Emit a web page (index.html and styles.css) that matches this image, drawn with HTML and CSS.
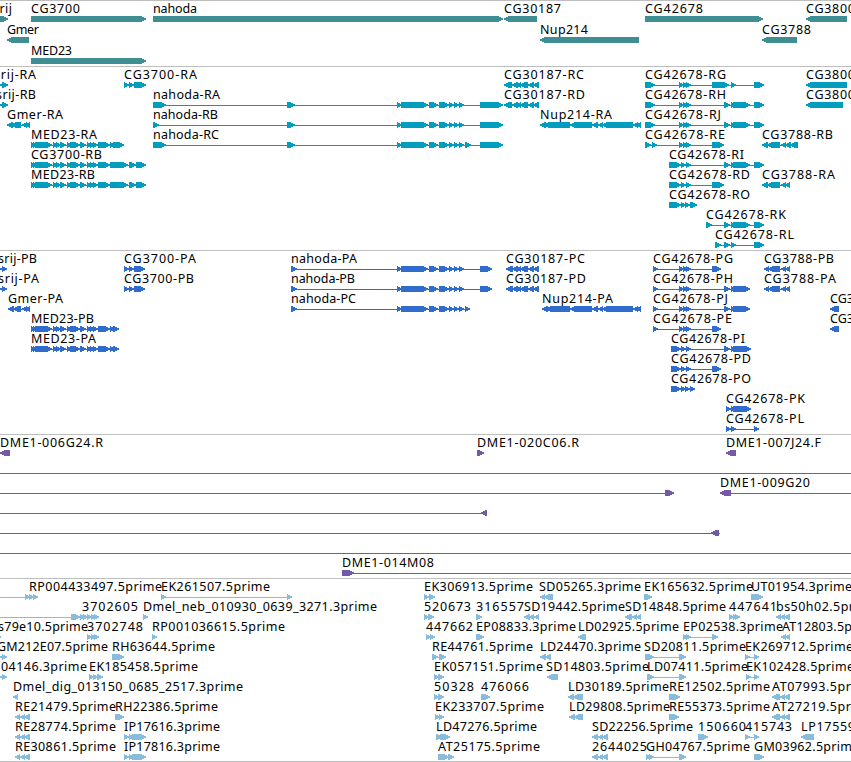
FILE: index.html
```html
<!DOCTYPE html>
<html lang="en">
<head>
<meta charset="utf-8">
<title>Genome tracks</title>
<link rel="stylesheet" href="styles.css">
</head>
<body>
<main class="browser" id="browser"></main>
<script src="tracks.js"></script>
</body>
</html>
```
FILE: styles.css
```css
body {
  margin: 0;
  background: #fff;
  overflow: hidden;
}

.browser {
  display: flex;
  flex-direction: column;
  width: 851px;
  border-bottom: 1px solid #bebebe;
}

.track {
  border-top: 1px solid #bebebe;
}

.track svg {
  display: block;
  width: 851px;
  overflow: hidden;
}

.label {
  font: 12.5px "Noto Sans", "DejaVu Sans", sans-serif;
  fill: #000;
}

.shape {
  shape-rendering: crispEdges;
  fill: currentColor;
}

.gene { color: #3f8e94; }
.transcript { color: #009dbf; }
.protein { color: #306ccd; }
.clone { color: #7459a7; }
.est { color: #88bcdd; }
```
FILE: tracks.js
```js
// Feature: row | label | label start | label end | strand | blocks | optional line extent
const med = "31-34 33-36 35-52 53-57 56-60 60-66 67-71 70-80 80-86 87-91 90-94 93-98 ";
const nah = "397-402 401-428 429-438 439-449 449-454 454-459 459-464 ";
const cg3 = "512-518 516-521 520-528 528-534 533-539";
const nup = " 570-592 592-598 598-603 602-633 633-638 637-641";
const mid = " 679-684 683-687 686-691";

const tracks = [
  { kind: "gene", height: 65, pitch: 21, features: `
0|srij|-7|11|+|-9-8
0|CG3700|31|79|+|31-146
0|nahoda|153|196|+|153-503
0|CG30187|504|560|-|504-537
0|CG42678|645|702|+|645-763
0|CG3800|806|854|-|806-847
1|Gmer|7|38|-|7-29
1|Nup214|540|587|-|540-639
1|CG3788|762|810|-|762-797
2|MED23|31|71|+|31-146` },
  { kind: "transcript", height: 183, pitch: 20, features: `
0|srij-RA|-6|35|+|-4-2 2-8
0|CG3700-RA|124|196|+|124-129 129-134 134-146
0|CG30187-RC|504|583|-|504-512 ${cg3}
0|CG42678-RG|645|725|+|645-655${mid} 712-729 731-736 754-764
0|CG3800|806|854|-|806-847
1|srij-RB|-4|35|+|-4-2 2-8
1|nahoda-RA|153|219|+|153-166 287-295 ${nah}480-503
1|CG30187-RD|504|584|-|504-512 ${cg3}
1|CG42678-RH|645|725|+|645-655${mid} 724-730 731-735 733-750 754-764
1|CG3800|806|854|-|806-843
2|Gmer-RA|7|62|-|7-13 11-21 22-27 25-30
2|nahoda-RB|153|217|+|153-159 287-295 ${nah}480-503
2|Nup214-RA|540|611|-|540-546 544-570${nup}
2|CG42678-RJ|645|720|+|645-655${mid} 724-730 731-735 733-750 754-764
3|MED23-RA|31|96|+|${med}98-110 110-115 113-124
3|nahoda-RC|153|218|+|153-166 287-295 ${nah}465-471 480-503
3|CG42678-RE|645|724|+|645-651 652-657${mid} 712-724
3|CG3788-RB|762|832|-|762-768 767-780 781-786 785-791 790-798
4|CG3700-RB|31|101|+|${med}98-110 110-128 129-136 136-146
4|CG42678-RI|669|743|+|669-681 681-686 686-691 724-730 731-735 733-750 754-764
5|MED23-RB|31|94|+|${med}98-110 110-128 129-136 136-146
5|CG42678-RD|669|749|+|669-681 681-686 686-691 712-724
5|CG3788-RA|762|834|-|762-768 767-780 781-786 785-790
6|CG42678-RO|669|749|+|669-681 681-686 685-690 690-697
7|CG42678-RK|706|785|+|706-712 724-730 731-735 733-750 754-764
8|CG42678-RL|715|793|+|715-721 724-730 731-736 754-764` },
  { kind: "protein", height: 183, pitch: 20, features: `
0|srij-PB|-2|36|+|-4-2 2-7
0|CG3700-PA|124|195|+|124-129 129-134 134-145
0|nahoda-PA|291|356|+|291-297 ${nah}480-492
0|CG30187-PC|506|584|-|506-513 ${cg3}
0|CG42678-PG|653|732|+|653-658${mid} 712-721
0|CG3788-PB|764|833|-|764-769 768-780 781-786 785-790
1|srij-PA|-2|38|+|-4-2 2-7
1|CG3700-PB|124|193|+|124-129 129-134 134-145
1|nahoda-PB|291|354|+|291-297 ${nah}480-492
1|CG30187-PD|506|585|-|506-513 ${cg3}
1|CG42678-PH|653|732|+|653-658${mid} 724-730 731-735 733-750
1|CG3788-PA|764|835|-|764-769 768-780 781-786 785-790
2|Gmer-PA|8|62|-|8-14 13-21 22-27 25-30
2|nahoda-PC|291|355|+|291-297 ${nah}465-470
2|Nup214-PA|542|612|-|542-548 546-570${nup}
2|CG42678-PJ|653|727|+|653-658${mid} 724-730 731-735 733-750
2|CG3|830|853|-|830-839
3|MED23-PB|31|93|+|${med}98-110 110-115 113-119
3|CG42678-PE|653|731|+|653-658${mid} 712-721
3|CG3|830|853|-|830-839
4|MED23-PA|31|95|+|${med}98-110 110-115 113-119
4|CG42678-PI|671|744|+|671-681 681-686 686-691 724-730 731-735 733-751
5|CG42678-PD|671|750|+|671-681 681-686 686-691 712-721
6|CG42678-PO|671|750|+|671-681 681-686 685-690 690-695
7|CG42678-PK|726|804|+|726-731 731-735 733-751
8|CG42678-PL|726|803|+|726-731 731-736 754-759` },
  { kind: "clone", height: 143, pitch: 20, features: `
0|DME1-006G24.R|0|102|-|0-10
0|DME1-020C06.R|477|578|+|477-484
0|DME1-007J24.F|726|820|-|726-736
1||0|0|+||0-851
2||0|0|+|665-674|0-674
2|DME1-009G20|720|809|-|720-731|720-851
3||0|0|-|481-487|0-487
4||0|0|-|711-719|0-720
5||0|0|+||0-851
6|DME1-014M08|342|433|+|342-354|342-851` },
  { kind: "est", height: 182, pitch: 20, features: `
0|RP004433497.5prime|29|161|+|25-29 29-33 33-38|0-37
0|EK261507.5prime|161|269|+|161-166 287-292
0|EK306913.5prime|424|532|+|424-429 429-435
0|SD05265.3prime|539|640|-|540-545 544-553
0|EK165632.5prime|644|752|+|644-652
0|UT01954.3prime|751|851|+|751-763
1|3702605|82|137|+|71-80 80-84 83-87 87-91 91-95 94-99|0-98
1|Dmel_neb_010930_0639_3271.3prime|143|376|+|143-148
1|520673|424|470|+|424-429 428-434
1|316557|476|523|+|476-482
1|SD19442.5prime|524|624|-|524-530 530-534 534-539
1|SD14848.5prime|625|725|-|625-632 632-637 636-641
1|447641|729|776|+|729-733 733-737 735-740
1|bs50h02.5pr|776|853|-|776-781 780-785 784-790
2|s79e10.5prime|-2|87|+|-4-1
2|3702748|87|142|+|87-91 91-95 94-99
2|RP001036615.5prime|152|284|+|152-157
2|447662|426|472|+|426-430 430-435
2|EP08833.3prime|476|575|+|476-484
2|LD02925.5prime|578|678|-|578-586
2|EP02538.3prime|683|782|+|683-687 686-691 712-718
2|AT12803.5p|782|851|-|781-786 785-790
3|GM212E07.5prime|-3|107|+|-4-2 2-7
3|RH63644.5prime|112|214|+|112-124
3|RE44761.5prime|432|532|+|432-438 439-446
3|LD24470.3prime|540|640|-|540-546 545-551
3|SD20811.5prime|644|745|+|645-654 679-686
3|EK269712.5prime|745|852|+|745-750 754-759
4|04146.3prime|1|86|+|-4-2 2-7
4|EK185458.5prime|89|197|+|89-93 93-97 97-103
4|EK057151.5prime|434|542|+|434-439 438-444
4|SD14803.5prime|546|648|-|547-558
4|LD07411.5prime|647|747|+|647-654 679-686
4|EK102428.5prime|746|853|+|746-751 754-759
5|Dmel_dig_013150_0685_2517.3prime|13|242|-|13-18
5|50328|434|473|+|434-439 438-444
5|476066|481|528|+|481-490
5|LD30189.5prime|568|668|-|568-574 573-583
5|RE12502.5prime|669|769|+|669-680
5|AT07993.5pr|772|850|-|772-780 780-785 784-790
6|RE21479.5prime|15|115|-|15-20 20-25 24-30
6|RH22386.5prime|115|217|+|115-124
6|EK233707.5prime|435|543|+|435-439 439-444
6|LD29808.5prime|569|669|-|569-575 574-583
6|RE55373.5prime|669|769|+|669-679
6|AT27219.5pr|772|850|-|772-780 780-785 784-790
7|RE28774.5prime|15|115|-|15-20 20-25 24-30
7|IP17616.3prime|124|219|+|124-129 129-133 132-146
7|LD47276.5prime|436|536|+|436-442 440-450
7|SD22256.5prime|592|692|-|592-598 598-603 602-608
7|150660|698|745|+|698-708
7|415743|745|791|+|745-750 754-759
7|LP17559|801|854|-|801-814
8|RE30861.5prime|15|115|-|15-20 20-25 24-30
8|IP17816.3prime|124|219|+|124-129 129-133 132-146
8|AT25175.5prime|438|539|+|438-449 448-454
8|2644025|592|646|-|592-598 598-603 602-608
8|GH04767.5prime|646|749|+|646-650 649-654 679-686
8|GM03962.5prim|754|851|+|754-764` }
];

const block = (text) => text.match(/^(-?\d+)-(-?\d+)$/).slice(1).map(Number);

// A block is a 6px bar whose last few pixels taper towards the strand direction.
function arrow([a, b], strand, y) {
  const tip = Math.min(b - a, 5);
  const s = strand === "+" ? 1 : -1;
  const [tail, point] = s > 0 ? [a, b] : [b, a];
  const neck = point - s * tip;
  const mid = point - s * tip * 0.5;
  return `M${tail} ${y}H${neck}L${mid} ${y + 1}L${point} ${y + 2.5}V${y + 3.5}` +
    `L${mid} ${y + 5}L${neck} ${y + 6}H${tail}Z`;
}

function draw(line, pitch) {
  const [row, label, start, end, strand, blocks, extent] = line.split("|");
  const base = 12 + row * pitch;
  const top = base + 3;
  const list = blocks ? blocks.split(" ").map(block) : [];
  const [from, to] = extent ? block(extent) : [list[0][0], list[list.length - 1][1]];
  let d = `M${from} ${top + 3}H${to}V${top + 4}H${from}Z`;
  d = (list.length > 1 || extent) ? `<path class="shape" d="${d}"/>` : "";
  d += list.map((b) => `<path class="shape" d="${arrow(b, strand, top)}"/>`).join("");
  if (label) {
    d += `<text class="label" x="${+start}" y="${base}" textLength="${end - start + 1}">${label}</text>`;
  }
  return d;
}

document.getElementById("browser").innerHTML = tracks.map((t) =>
  `<section class="track ${t.kind}"><svg height="${t.height}">` +
  t.features.trim().split("\n").map((f) => draw(f, t.pitch)).join("") +
  `</svg></section>`).join("");
```
